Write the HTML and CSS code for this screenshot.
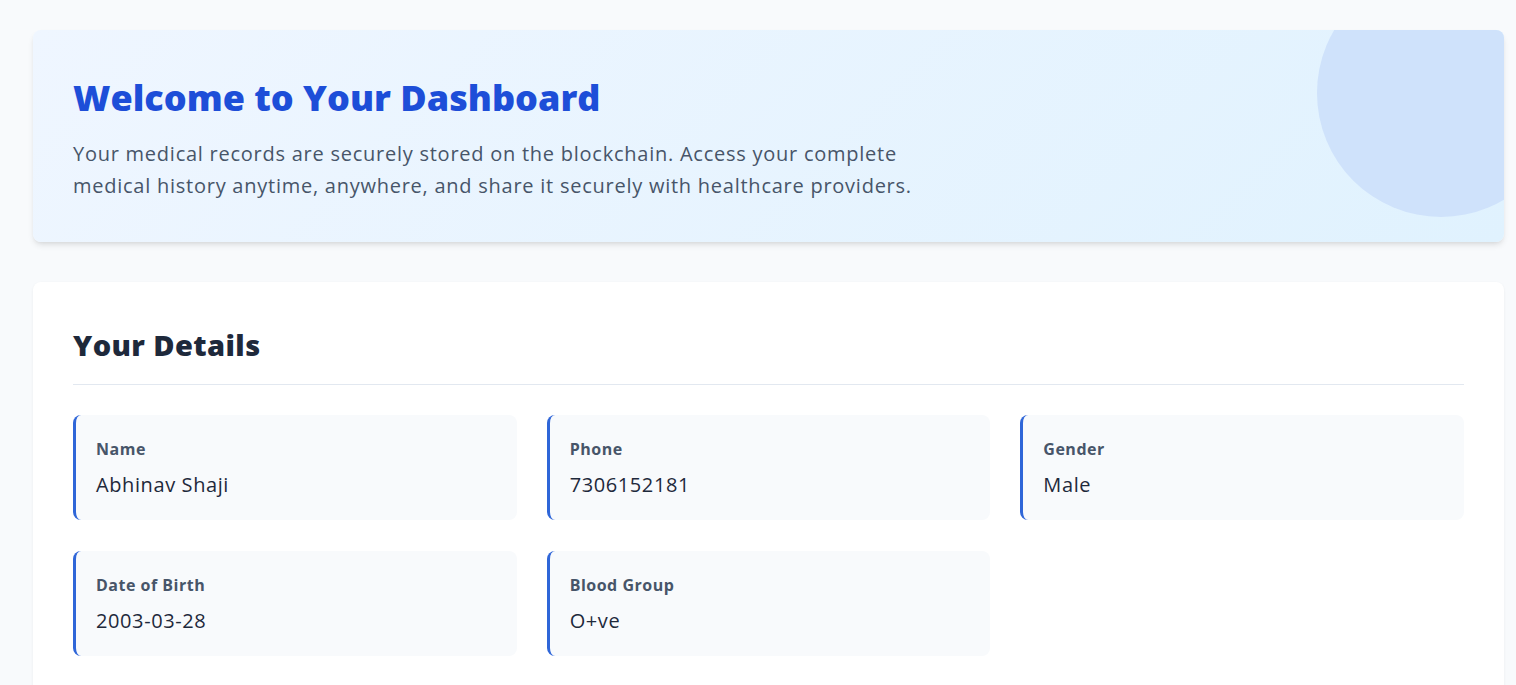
FILE: index.html
```html
<!DOCTYPE html>
<html lang="en">
<head>
<meta charset="utf-8">
<title>Dashboard</title>
<link rel="stylesheet" href="styles.css">
</head>
<body>
<main class="main">
  <section class="hero">
    <div class="hero-circle"></div>
    <h1 class="hero-title">Welcome to Your Dashboard</h1>
    <p class="hero-text">Your medical records are securely stored on the blockchain. Access your complete medical history anytime, anywhere, and share it securely with healthcare providers.</p>
  </section>
  <section class="card">
    <h2 class="card-title">Your Details</h2>
    <div class="details">
      <div class="item"><div class="label">Name</div><div class="value">Abhinav Shaji</div></div>
      <div class="item"><div class="label">Phone</div><div class="value">7306152181</div></div>
      <div class="item"><div class="label">Gender</div><div class="value">Male</div></div>
      <div class="item"><div class="label">Date of Birth</div><div class="value">2003-03-28</div></div>
      <div class="item"><div class="label">Blood Group</div><div class="value">O+ve</div></div>
    </div>
  </section>
</main>
</body>
</html>
```
FILE: styles.css
```css
* { box-sizing: border-box; }
html, body { margin: 0; padding: 0; }
body {
  background: #f8fafc;
  font-family: "Open Sans", "Noto Sans", sans-serif;
  color: #1e293b;
  overflow: hidden;
}
.main {
  padding: 30px 12px 0 33px;
  display: flex;
  flex-direction: column;
  gap: 40px;
}
.hero {
  position: relative;
  overflow: hidden;
  height: 212px;
  border-radius: 8px;
  background: linear-gradient(135deg, #eff6ff 0%, #e0f2fe 100%);
  box-shadow: 0 4px 6px -1px rgba(0,0,0,0.10), 0 2px 4px -2px rgba(0,0,0,0.08);
  padding: 44px 41px 0 40px;
}
.hero-circle {
  position: absolute;
  width: 248px;
  height: 248px;
  border-radius: 50%;
  background: #cfe2fb;
  left: 1284px;
  top: -61px;
}
.hero-title {
  position: relative;
  margin: 0;
  font-size: 36px;
  line-height: 48px;
  font-weight: 800;
  color: #1d4ed8;
  letter-spacing: 0;
}
.hero-text {
  position: relative;
  margin: 16px 0 0;
  max-width: 860px;
  font-size: 20px;
  line-height: 32px;
  letter-spacing: 0.75px;
  color: #475569;
}
.card {
  background: #fff;
  border-radius: 8px;
  padding: 40px 40px 40px 40px;
  box-shadow: 0 1px 3px rgba(0,0,0,0.06);
  min-height: 420px;
}
.card-title {
  margin: 0;
  font-size: 29px;
  line-height: 46px;
  font-weight: 800;
  letter-spacing: 0.4px;
  color: #1e293b;
  padding-bottom: 16px;
  border-bottom: 1px solid #e2e8f0;
}
.details {
  margin-top: 30px;
  display: grid;
  grid-template-columns: repeat(3, 1fr);
  gap: 31px 30px;
}
.item {
  background: #f8fafc;
  border-left: 3px solid #2f66d8;
  border-radius: 8px;
  height: 105px;
  padding: 22px 20px 0 20px;
}
.label {
  font-size: 16px;
  line-height: 24px;
  font-weight: 700;
  letter-spacing: 0.5px;
  color: #475569;
}
.value {
  margin-top: 10px;
  font-size: 20px;
  line-height: 28px;
  letter-spacing: 0.6px;
  color: #1e293b;
}
```
